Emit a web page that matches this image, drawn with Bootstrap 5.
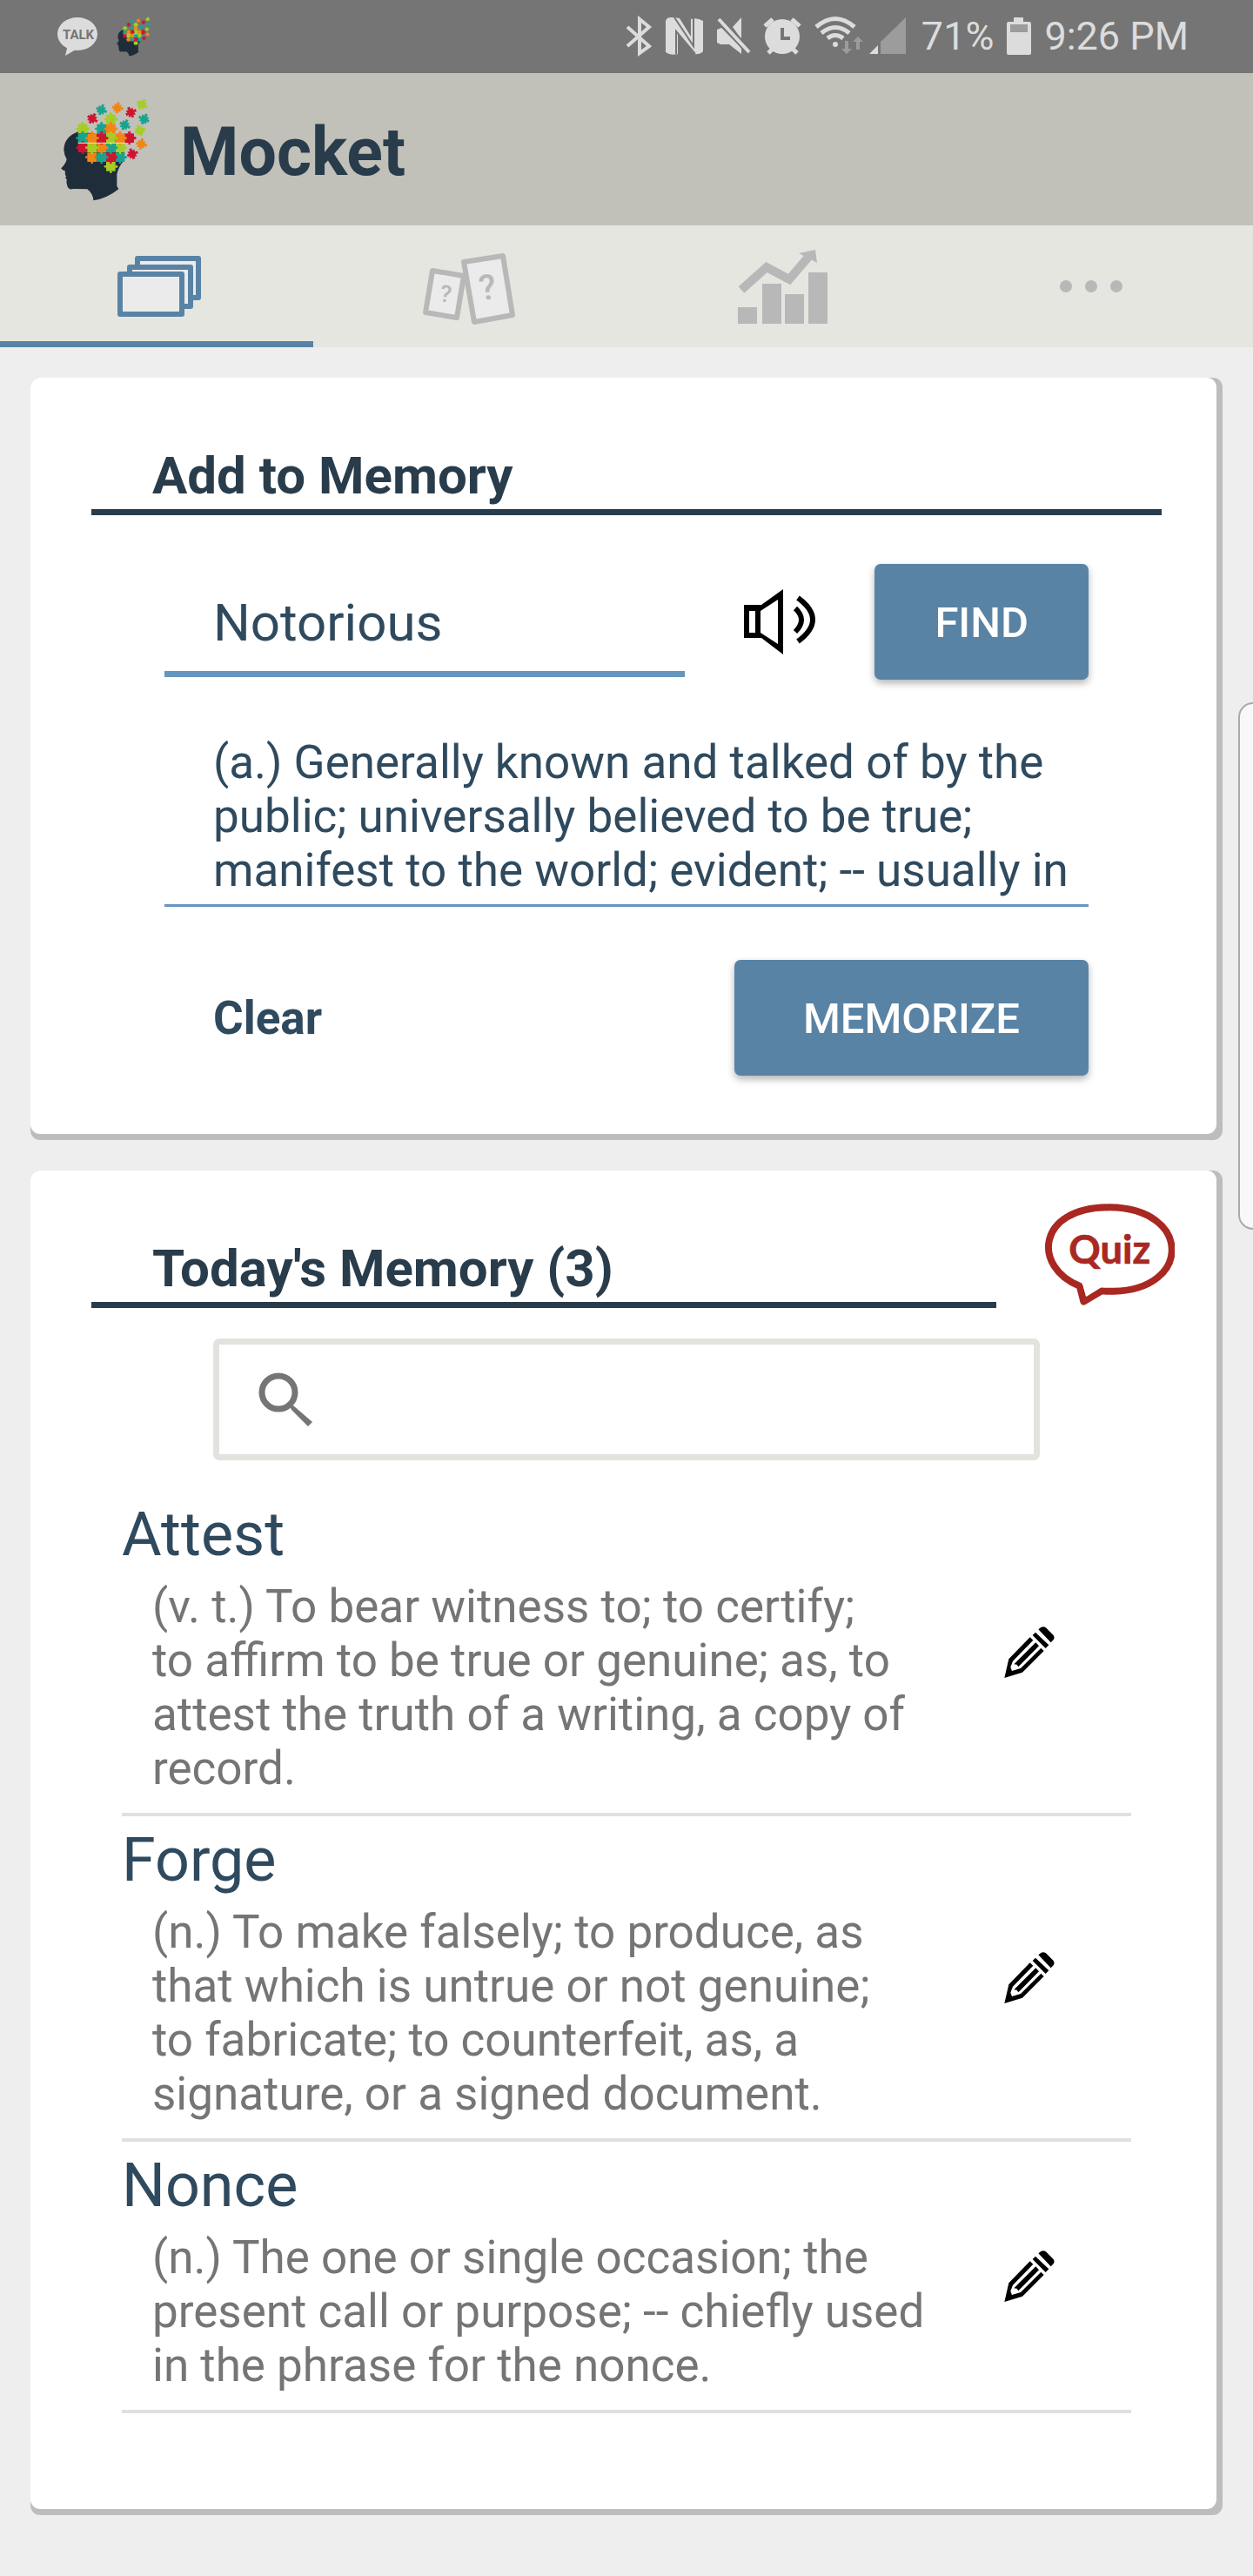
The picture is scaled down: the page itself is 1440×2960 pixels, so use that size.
<!DOCTYPE html>
<html lang="en">
<head>
<meta charset="utf-8">
<meta name="viewport" content="width=device-width, initial-scale=1">
<title>Mocket</title>
<link href="https://cdn.jsdelivr.net/npm/bootstrap@5.3.0/dist/css/bootstrap.min.css" rel="stylesheet">
<style>
  :root { --navy: #293c4b; --ink: #2f4a5e; --blue: #5983a5; --line: #6596be; --muted-ink: #757575; }
  body { font-family: Roboto, "Noto Sans", sans-serif; background: #eee; color: var(--ink); }
  svg { display: block; flex: none; }
  .status-bar { height: 84px; padding: 0 74px 0 66px; background: #757575; color: #dcdcdc; font-size: 45px; line-height: 84px; }
  .status-left { gap: 21px; }
  .status-right { gap: 15px; }
  .app-header { height: 175px; padding: 0 70px; gap: 33px; background: #c1c0b9; }
  .app-name { padding-top: 7px; font-size: 77px; line-height: 90px; font-weight: 700; color: var(--navy); }
  .tab-strip { background: #e6e6e0; }
  .tab-strip .nav-link { height: 140px; padding: 7px 0 0; border-bottom: 7px solid transparent; border-radius: 0; }
  .tab-strip .nav-link.active { border-bottom-color: var(--blue); background: transparent; }
  .page { padding: 35px 35px 70px; gap: 35px; }
  .panel-shadow { background: #bdbdbd; padding: 0 7px 7px 0; border-radius: 11px; }
  .panel { background: #fff; border-radius: 11px; }
  .panel-title { margin: 0; padding: 77px 0 2px 70px; border-bottom: 7px solid var(--navy); font-size: 60px; line-height: 72px; font-weight: 700; color: var(--navy); }
  .add-panel { padding: 0 63px 67px 70px; }
  .add-form { padding: 56px 84px 0; }
  .word-row { gap: 68px; }
  .line-field { border: 0; border-radius: 0; background: transparent; color: var(--ink); padding: 0 0 0 56px; }
  .line-field:focus { background: transparent; box-shadow: none; color: var(--ink); }
  .word-input { height: 130px; padding-top: 12px; border-bottom: 7px solid var(--line); font-size: 60px; line-height: 72px; }
  .meaning-input { margin-top: 64px; height: 197px; padding: 0 0 8px 56px; border-bottom: 3px solid var(--line); font-size: 53px; line-height: 62px; resize: none; overflow: hidden; }
  .action-row { margin-top: 61px; padding-left: 56px; }
  .btn-solid { height: 133px; padding: 2px 79px 0; border: 0; border-radius: 7px; background: var(--blue); color: #fff; font-size: 49px; line-height: 60px; font-weight: 500; box-shadow: 0 4px 8px rgba(0,0,0,.3); }
  .btn-solid:hover { background: #4d7495; color: #fff; }
  .btn-find { padding: 2px 69px 0; }
  .btn-clear { padding: 0; border: 0; color: var(--ink); font-size: 53px; line-height: 62px; font-weight: 700; }
  .today-head { padding: 0 48px 0 70px; gap: 55px; }
  .today-head .btn { margin-top: 38px; }
  .search-box { margin: 35px 203px 0 210px; height: 140px; padding-left: 45px; border: 7px solid #e1e4de; border-radius: 7px; gap: 20px; }
  .search-box input { font-size: 53px; height: 100px; }
  .word-list { margin: 35px 98px 0 105px; padding-bottom: 110px; }
  .word-item { padding: 8px 88px 20px 0; border-bottom: 4px solid #e0e0e0; }
  .word-item h3 { margin: 0; font-size: 70px; line-height: 84px; font-weight: 400; color: var(--ink); }
  .word-item p { margin: 10px 0 0; padding-left: 35px; font-size: 53px; line-height: 62px; color: var(--muted-ink); }
  .word-item .btn { margin-top: 12px; }
  .edge-handle { position: absolute; top: 807px; right: 0; width: 17px; height: 606px; background: #f8f8f8; border: 2px solid #aaa; border-right: 0; border-radius: 17px 0 0 17px; }
</style>
</head>
<body>
<svg width="0" height="0" class="position-absolute" aria-hidden="true">
  <defs>
    <g id="piece">
      <rect x="-16" y="-16" width="32" height="32"/>
      <circle cx="0" cy="-19" r="5"/><circle cx="19" cy="0" r="5"/>
      <circle cx="0" cy="19" r="4"/><circle cx="-19" cy="0" r="4"/>
    </g>
    <g id="loose">
      <path d="M-13 -13L-4 -11L-5 -20H5L4 -11L13 -13L11 -4L20 -5V5L11 4L13 13L4 11L5 18H-5L-4 11L-13 13L-11 4L-18 5V-5L-11 -4Z"/>
    </g>
    <symbol id="brand" viewBox="90 330 310 360">
      <path fill="#1f2c3a" d="M150 447Q100 465 99 510Q100 528 109 543Q106 558 90 574Q92 581 103 582L104 598L108 601L104 606L109 612Q106 625 112 638Q118 650 132 645L180 646Q200 662 201 685Q245 680 288 646L282 635V595Q286 570 308 545V470Z"/>
      <g fill="#a4cd27"><use href="#piece" x="164" y="438"/><use href="#piece" x="261" y="405"/><use href="#piece" x="261" y="568"/></g>
      <g fill="#18a491"><use href="#piece" x="164" y="470"/><use href="#piece" x="229" y="438"/></g>
      <g fill="#cf1430"><use href="#piece" x="164" y="503"/><use href="#piece" x="325" y="470"/></g>
      <g fill="#f18516"><use href="#piece" x="261" y="438"/><use href="#piece" x="196" y="536"/></g>
      <use href="#piece" x="293" y="536" fill="#18a491"/>
      <use href="#piece" x="261" y="536" fill="#cf1430"/>
      <use href="#piece" x="229" y="536" fill="#18a491"/>
      <use href="#piece" x="293" y="503" fill="#a4cd27"/>
      <use href="#piece" x="261" y="503" fill="#18a491"/>
      <use href="#piece" x="229" y="503" fill="#f18516"/>
      <use href="#piece" x="196" y="503" fill="#a4cd27"/>
      <use href="#piece" x="293" y="470" fill="#f18516"/>
      <use href="#piece" x="261" y="470" fill="#a4cd27"/>
      <use href="#piece" x="229" y="470" fill="#cf1430"/>
      <use href="#piece" x="196" y="470" fill="#f18516"/>
      <path d="M148 487H310" stroke="#f3f0c0" stroke-width="3"/>
      <use href="#loose" transform="translate(228 373) rotate(20)" fill="#18a491"/>
      <use href="#loose" transform="translate(197 403) rotate(30)" fill="#cf1430"/>
      <use href="#loose" transform="translate(284 366) rotate(10)" fill="#f18516"/>
      <use href="#loose" transform="translate(330 382) rotate(-25)" fill="#cf1430"/>
      <use href="#loose" transform="translate(368 354) rotate(30)" fill="#a4cd27"/>
      <use href="#loose" transform="translate(376 405) rotate(-65)" fill="#18a491"/>
      <use href="#loose" transform="translate(309 425) rotate(25)" fill="#18a491"/>
      <use href="#loose" transform="translate(361 444) rotate(-20)" fill="#a4cd27"/>
      <use href="#loose" transform="translate(366 491) rotate(12)" fill="#f18516"/>
      <use href="#loose" transform="translate(335 525) rotate(-20)" fill="#cf1430"/>
    </symbol>
    <symbol id="pencil" viewBox="74 54 174 177">
      <path d="M192 64L202 56Q211 53 218 58L244 84Q249 92 244 100L235 109ZM182 74L228 118L217 129L172 84ZM163 91L174 101L104 173L96 194L101 207L131 198L201 128L211 138L137 212L75 231L90 166ZM183 109L194 121L123 193L118 185L108 184Z"/>
    </symbol>
  </defs>
</svg>

<div class="status-bar d-flex justify-content-between align-items-center">
  <div class="status-left d-flex align-items-center">
    <svg width="47" height="48" viewBox="66 17 47 48" role="img" aria-label="Talk">
      <path fill="#dcdcdc" d="M78 50L75 63L87 56Z"/><ellipse cx="89" cy="38" rx="23" ry="19" fill="#dcdcdc"/>
      <text x="90" y="44" text-anchor="middle" font-size="15" font-weight="700" fill="#757575">TALK</text>
    </svg>
    <svg width="40" height="46"><use href="#brand"/></svg>
  </div>
  <div class="status-right d-flex align-items-center">
    <svg width="326" height="50" viewBox="718 17 326 50" fill="#dcdcdc" aria-hidden="true">
      <path fill="none" stroke="#dcdcdc" stroke-width="4" d="M721 31L746 53L735 61V22L746 31L721 53"/>
      <path d="M771 20Q776 20 781 21L794 42V22Q801 20 808 24V59Q804 63 798 62L779 37V62Q770 64 765 60V24Q766 20 771 20Z"/>
      <path fill="none" stroke="#757575" stroke-width="2" d="M775 20L797 53V21M777 62V36L799 62"/>
      <path d="M824 34L829 32H834L852 56V62L838 51H828L824 49ZM842 31L852 20V45Z"/>
      <path d="M826 23L861 59" stroke="#757575" stroke-width="8"/><path d="M826 22L861 60" stroke="#dcdcdc" stroke-width="4"/>
      <circle cx="899" cy="42" r="20"/><path stroke="#dcdcdc" stroke-width="5" d="M879 30L888 22M910 22L919 30M889 55L883 61M910 55L916 61"/>
      <path fill="none" stroke="#757575" stroke-width="4" d="M899 32V44H908"/>
      <g fill="none" stroke="#dcdcdc" stroke-width="5"><path d="M938 31Q960 12 982 31M944 38Q960 25 976 38M951 44Q960 37 969 44"/></g><circle cx="960" cy="51" r="3"/>
      <path fill="#9c9c9c" d="M971 47H975V56H979L973 62L967 56H971ZM984 57H988V48H992L986 42L980 48H984Z"/>
      <path fill="#9c9c9c" d="M1012 48L1041 20V62H1012Z"/><path d="M999 62L1009 52V62Z"/>
    </svg>
    <span>71%</span>
    <svg width="28" height="44" viewBox="0 0 28 44" aria-hidden="true"><path fill="#dcdcdc" d="M8 0H19V5H26Q28 5 28 8V41Q28 43 26 43H2Q0 43 0 41V8Q0 5 2 5H8Z"/><path fill="#9c9c9c" d="M4 8H24V17H4Z"/></svg>
    <span>9:26 PM</span>
  </div>
</div>

<header class="app-header d-flex align-items-center">
  <svg width="104" height="120" role="img" aria-label="Mocket logo"><use href="#brand"/></svg>
  <h1 class="app-name m-0">Mocket</h1>
</header>

<nav class="tab-strip nav nav-fill" aria-label="Sections">
  <a class="nav-item nav-link active d-flex align-items-center justify-content-center" href="#" aria-label="Cards">
    <svg width="120" height="100" viewBox="120 279 120 100" fill="#ebebeb" stroke="#5983a5" stroke-width="6" stroke-linejoin="round"><rect x="158" y="297" width="70" height="45"/><rect x="149" y="307" width="70" height="45"/><rect x="138" y="315" width="71" height="46"/></svg>
  </a>
  <a class="nav-item nav-link d-flex align-items-center justify-content-center" href="#" aria-label="Quiz cards">
    <svg width="120" height="100" viewBox="480 279 120 100" fill="#ebebeb" stroke="#b8b8b8" stroke-width="6" stroke-linejoin="round"><path d="M497 311L533 317L525 365L489 359Z"/><path d="M533 301L578 294L589 362L545 370Z"/>
      <g fill="#b8b8b8" stroke="none" font-weight="500" text-anchor="middle"><text font-size="27" transform="translate(511 347) rotate(8)">?</text><text font-size="40" transform="translate(562 344) rotate(-8)">?</text></g></svg>
  </a>
  <a class="nav-item nav-link d-flex align-items-center justify-content-center" href="#" aria-label="Statistics">
    <svg width="120" height="100" viewBox="840 279 120 100" fill="#b8b8b8"><path d="M848 353H870V372H848ZM876 326H898V372H876ZM902 338H924V372H902ZM929 313H951V372H929Z"/><path fill="none" stroke="#b8b8b8" stroke-width="10" d="M852 333L881 307L907 321L931 293"/><path d="M918 291L937 287L939 302Z"/></svg>
  </a>
  <a class="nav-item nav-link d-flex align-items-center justify-content-center" href="#" aria-label="More">
    <svg width="120" height="100" viewBox="1200 279 120 100" fill="#b8b8b8"><circle cx="1225" cy="329" r="7"/><circle cx="1254" cy="329" r="7"/><circle cx="1283" cy="329" r="7"/></svg>
  </a>
</nav>

<main class="page d-flex flex-column">
  <section class="panel-shadow">
    <div class="panel add-panel">
      <h2 class="panel-title">Add to Memory</h2>
      <form class="add-form">
        <div class="word-row d-flex align-items-start">
          <input class="form-control line-field word-input" type="text" value="Notorious" aria-label="Word">
          <button class="btn p-0 border-0 align-self-center" type="button" aria-label="Listen">
            <svg width="82" height="75" viewBox="0 0 82 75"><path fill-rule="evenodd" d="M0 18H20L45 0V75L20 56H0ZM6 25V50H13V25ZM19 25V50L39 63V12Z"/><path fill="none" stroke="#000" stroke-width="6" d="M59 22Q73 35 59 49M62 10Q96 35 62 60"/></svg>
          </button>
          <button class="btn btn-solid btn-find" type="button">FIND</button>
        </div>
        <textarea class="form-control line-field meaning-input" aria-label="Meaning">(a.) Generally known and talked of by the public; universally believed to be true; manifest to the world; evident; -- usually in</textarea>
        <div class="action-row d-flex justify-content-between align-items-center">
          <button class="btn btn-clear" type="reset">Clear</button>
          <button class="btn btn-solid" type="button">MEMORIZE</button>
        </div>
      </form>
    </div>
  </section>

  <section class="panel-shadow">
    <div class="panel">
      <div class="today-head d-flex align-items-start">
        <h2 class="panel-title flex-grow-1">Today's Memory (3)</h2>
        <button class="btn p-0 border-0" type="button">
          <svg width="150" height="117" viewBox="600 188 450 352">
            <path fill="none" stroke="#a92822" stroke-width="24" stroke-linejoin="round" d="M722 473C560 410 570 200 826 201C1110 205 1110 485 840 491Q820 492 798 490L736 527Z" stroke-dasharray="none"/>
            <path fill="#fff" d="M720 440L733 470L745 510L795 478L810 440Z"/>
            <text x="826" y="395" text-anchor="middle" font-family="Lato, sans-serif" font-weight="700" font-size="136" fill="#a92822" stroke="#a92822" stroke-width="2" stroke-linejoin="round">Quiz</text>
          </svg>
        </button>
      </div>
      <div class="search-box d-flex align-items-center">
        <svg width="62" height="62" viewBox="0 0 62 62" aria-hidden="true"><circle cx="23" cy="23" r="19" fill="none" stroke="#757575" stroke-width="7"/><path d="M36 39L40 38L62 57L57 62L38 43Z" fill="#757575"/></svg>
        <input class="form-control border-0 shadow-none bg-transparent" type="search" aria-label="Search words">
      </div>
      <div class="word-list">
        <article class="word-item d-flex justify-content-between align-items-center">
          <div><h3>Attest</h3><p>(v. t.) To bear witness to; to certify;<br>to affirm to be true or genuine; as, to<br>attest the truth of a writing, a copy of<br>record.</p></div>
          <button class="btn p-0 border-0" type="button" aria-label="Edit Attest"><svg width="58" height="59"><use href="#pencil"/></svg></button>
        </article>
        <article class="word-item d-flex justify-content-between align-items-center">
          <div><h3>Forge</h3><p>(n.) To make falsely; to produce, as<br>that which is untrue or not genuine;<br>to fabricate; to counterfeit, as, a<br>signature, or a signed document.</p></div>
          <button class="btn p-0 border-0" type="button" aria-label="Edit Forge"><svg width="58" height="59"><use href="#pencil"/></svg></button>
        </article>
        <article class="word-item d-flex justify-content-between align-items-center">
          <div><h3>Nonce</h3><p>(n.) The one or single occasion; the<br>present call or purpose; -- chiefly used<br>in the phrase for the nonce.</p></div>
          <button class="btn p-0 border-0" type="button" aria-label="Edit Nonce"><svg width="58" height="59"><use href="#pencil"/></svg></button>
        </article>
      </div>
    </div>
  </section>
</main>
<div class="edge-handle" aria-hidden="true"></div>
<script src="https://cdn.jsdelivr.net/npm/bootstrap@5.3.0/dist/js/bootstrap.bundle.min.js"></script>
</body>
</html>
